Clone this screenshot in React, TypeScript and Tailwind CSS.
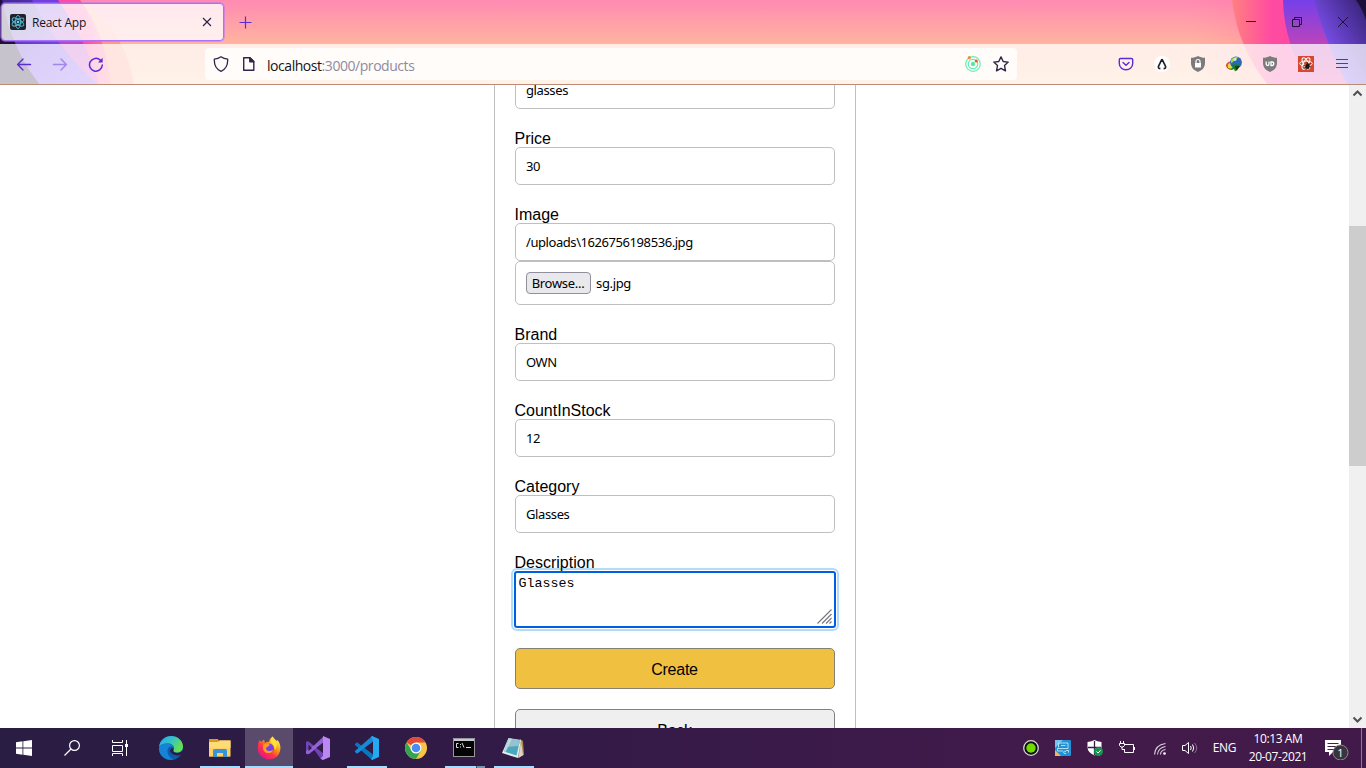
import React from "react";

const UI = "font-['Open_Sans','Noto_Sans',sans-serif]";

function ThemeArt() {
  return (
    <svg className="absolute inset-0" width="1366" height="85" viewBox="0 0 1366 85" preserveAspectRatio="none">
      <defs>
        <linearGradient id="sky" x1="0" y1="0" x2="0" y2="1">
          <stop offset="0" stopColor="#ff8ab2" />
          <stop offset=".5" stopColor="#ffb3a0" />
          <stop offset="1" stopColor="#ffcda2" />
        </linearGradient>
        <linearGradient id="lpurple" x1="0" y1="0" x2="1" y2="1">
          <stop offset="0" stopColor="#3d2a8c" />
          <stop offset=".5" stopColor="#6f42dd" />
          <stop offset="1" stopColor="#9059ff" />
        </linearGradient>
        <linearGradient id="lviolet" x1="0" y1="0" x2="0" y2="1">
          <stop offset="0" stopColor="#6f3fe0" />
          <stop offset=".5" stopColor="#b745c4" />
          <stop offset="1" stopColor="#ea50cc" />
        </linearGradient>
        <linearGradient id="lpink" x1="0" y1="0" x2="1" y2="0">
          <stop offset="0" stopColor="#ff4aa2" />
          <stop offset=".75" stopColor="#ff4aa2" />
          <stop offset="1" stopColor="#ff7f90" />
        </linearGradient>
        <linearGradient id="rorange" x1="0" y1="0" x2="1" y2="0">
          <stop offset="0" stopColor="#ff8080" />
          <stop offset=".3" stopColor="#ff4aa2" />
          <stop offset="1" stopColor="#ff4aa2" />
        </linearGradient>
        <linearGradient id="rviolet" x1="0" y1="0" x2="0" y2="1">
          <stop offset="0" stopColor="#7440ea" />
          <stop offset=".55" stopColor="#c044b8" />
          <stop offset="1" stopColor="#ee48a8" />
        </linearGradient>
        <linearGradient id="rpurple" x1="1" y1="0" x2=".3" y2=".7">
          <stop offset="0" stopColor="#33206f" />
          <stop offset="1" stopColor="#8052f4" />
        </linearGradient>
        <linearGradient id="glow" x1="0" y1="0" x2="1" y2="0">
          <stop offset="0" stopColor="#ff6aa2" stopOpacity="0" />
          <stop offset="1" stopColor="#ff5f9c" stopOpacity=".55" />
        </linearGradient>
      </defs>
      <rect width="1366" height="85" fill="url(#sky)" />
      <path d="M0 0H80Q126 30 134 85H0Z" fill="#ff9a86" />
      <path d="M0 0H80Q106 35 111 85H0Z" fill="url(#lpink)" />
      <path d="M0 0H58Q86 40 99 85H0Z" fill="url(#lviolet)" />
      <path d="M0 0H32Q62 55 99 85H0Z" fill="url(#lpurple)" />
      <path d="M0 0H2Q12 50 40 85H0Z" fill="#20113a" />
      <rect x="1190" width="78" height="85" fill="url(#glow)" opacity=".5" />
      <path d="M1232 0Q1238 48 1268 85H1366V0Z" fill="url(#rorange)" />
      <path d="M1283 0Q1284 45 1310 85H1366V0Z" fill="url(#rviolet)" />
      <path d="M1314 0Q1328 50 1348 85H1366V0Z" fill="url(#rpurple)" />
      <path d="M1356 0Q1363 10 1366 20V0Z" fill="#1c1038" />
    </svg>
  );
}

function ReactLogo() {
  return (
    <svg width="16" height="16" viewBox="0 0 16 16">
      <rect width="16" height="16" rx="2" fill="#20232a" />
      <g fill="none" stroke="#55b7d0" strokeWidth=".9">
        <ellipse cx="8" cy="8" rx="2.6" ry="6.6" />
        <ellipse cx="8" cy="8" rx="2.6" ry="6.6" transform="rotate(60 8 8)" />
        <ellipse cx="8" cy="8" rx="2.6" ry="6.6" transform="rotate(120 8 8)" />
      </g>
      <circle cx="8" cy="8" r="1.3" fill="#61dafb" />
    </svg>
  );
}

function TabStrip() {
  return (
    <div className="relative flex h-11 items-start">
      <div className="mt-[3px] ml-px flex h-[38px] w-[223px] items-center rounded-[4px] border border-[#ac70ff] bg-white/80 pl-2 shadow-[0_0_0_0.5px_#ac70ff]">
        <ReactLogo />
        <span className={`${UI} ml-[6px] w-[158px] pt-px text-[12px] tracking-[-0.25px] text-[#15141a]`}>React App</span>
        <svg className="ml-[9px]" width="16" height="16" viewBox="0 0 16 16" stroke="#2b1f44" strokeWidth="1.1">
          <path d="M4 4L12 12M12 4L4 12" />
        </svg>
      </div>
      <svg className="mt-[15px] ml-[14px]" width="16" height="16" viewBox="0 0 16 16" stroke="#5b2bd6" strokeWidth="1.2">
        <path d="M7.5 1.5V13.5M1.5 7.5H13.5" />
      </svg>
      <div className="ml-auto flex h-11 text-[#1f1235]">
        <svg width="46" height="44" viewBox="0 0 46 44" stroke="currentColor" fill="none">
          <path d="M18 21.5H28" />
        </svg>
        <svg width="46" height="44" viewBox="0 0 46 44" stroke="currentColor" fill="none">
          <path d="M18.5 19.5H25.5V26.5H18.5ZM20.5 19.5V17.5H27.5V24.5H25.5" />
        </svg>
        <svg width="46" height="44" viewBox="0 0 46 44" stroke="currentColor" fill="none">
          <path d="M18 17L28 27M28 17L18 27" />
        </svg>
      </div>
    </div>
  );
}

function Shield({ children }: { children: React.ReactNode }) {
  return (
    <svg width="16" height="16" viewBox="0 0 16 16">
      <path d="M8 0C10 1.2 12.5 1.7 15 1.8V7C15 11.5 12 14.5 8 16C4 14.5 1 11.5 1 7V1.8C3.5 1.7 6 1.2 8 0Z" fill="#7b7b7b" />
      {children}
    </svg>
  );
}

function Toolbar() {
  return (
    <div className="relative flex h-[41px] items-center border-b border-[#bc8a78] bg-white/75">
      <div className="flex w-[205px] gap-5 pl-4 text-[#5b2bd6]">
        <svg width="16" height="16" viewBox="0 0 16 16" fill="none" stroke="currentColor" strokeWidth="1.4" strokeLinecap="round" strokeLinejoin="round">
          <path d="M14.5 8.5H1.8M7 3.1L1.6 8.5L7 13.9" />
        </svg>
        <svg className="opacity-45" width="16" height="16" viewBox="0 0 16 16" fill="none" stroke="currentColor" strokeWidth="1.4" strokeLinecap="round" strokeLinejoin="round">
          <path d="M1.5 8.5H14.2M9 3.1L14.4 8.5L9 13.9" />
        </svg>
        <svg width="16" height="16" viewBox="0 0 16 16" fill="none" stroke="currentColor" strokeWidth="1.5" strokeLinecap="round">
          <path d="M14.3 9A6.4 6.4 0 1 1 12.3 4.1" />
          <path d="M14.6 1.8V6.4H10Z" fill="currentColor" stroke="none" />
        </svg>
      </div>
      <div className="flex h-8 w-[812px] items-center rounded-[4px] bg-[#fffcf9] px-2">
        <svg width="16" height="16" viewBox="0 0 16 16" fill="none" stroke="#30254a" strokeWidth="1.3" strokeLinejoin="round">
          <path d="M8 .8C9.6 2 12 3 14.7 3.2C14.9 8.5 12.5 13.5 8 15.3C3.5 13.5 1.1 8.5 1.3 3.2C4 3 6.400 2 8 .8Z" />
        </svg>
        <svg className="ml-3" width="16" height="16" viewBox="0 0 16 16" fill="none" stroke="#30254a" strokeWidth="1.4" strokeLinejoin="round">
          <path d="M2.7 1.7H9L12.8 5.5V14.3H2.7Z" />
          <path d="M8.8 1.7V5.7H12.8Z" fill="#30254a" />
        </svg>
        <span className={`${UI} ml-[10px] pt-[3px] text-[14px] leading-[19px] tracking-[-0.45px] text-[#8f8aa0]`}>
          <span className="text-[#15141a]">localhost</span>:3000/products
        </span>
        <svg className="ml-auto" width="16" height="16" viewBox="0 0 16 16" fill="none" stroke="#6aefa8" strokeWidth="1.2">
          <circle cx="8" cy="8" r="7.3" />
          <circle cx="8" cy="8" r="4.7" stroke="#62ebc4" />
          <circle cx="8" cy="8" r="2.2" fill="#5ce8a0" stroke="none" />
          <circle cx="4.3" cy="1.7" r="1.6" fill="#f28a3c" stroke="none" />
          <circle cx="11.3" cy="5" r="1.6" fill="#f0552c" stroke="none" />
        </svg>
        <svg className="ml-3" width="16" height="16" viewBox="0 0 16 16" fill="none" stroke="#30254a" strokeWidth="1.4" strokeLinejoin="round">
          <path d="M8 .9L10.2 5.5L15.2 6.1L11.5 9.6L12.5 14.8L8 12.3L3.5 14.8L4.5 9.6L.8 6.1L5.8 5.5Z" />
        </svg>
      </div>
      <div className="ml-auto flex gap-5 pr-4">
        <svg width="16" height="16" viewBox="0 0 16 16" fill="none" stroke="#5b2bd6" strokeWidth="1.4" strokeLinecap="round" strokeLinejoin="round">
          <path d="M2.5 2.5H13.5Q14.7 2.5 14.7 3.7V7.5A6.7 6.3 0 0 1 1.3 7.5V3.7Q1.3 2.5 2.5 2.5Z" />
          <path d="M5 6.5L8 9.3L11 6.5" />
        </svg>
        <svg width="16" height="16" viewBox="0 0 16 16">
          <circle cx="8" cy="8" r="8" fill="#fff" />
          <path d="M8 3.2L4.5 10.2Q3.9 12.5 6.4 12.7M8 3.2L11.5 10.2Q12.1 12.5 9.6 12.7" fill="none" stroke="#222" strokeWidth="1.7" />
        </svg>
        <Shield>
          <rect x="5" y="7" width="6" height="4.5" fill="#fff" />
          <path d="M6 7V5.5A2 2 0 0 1 10 5.5V7" fill="none" stroke="#fff" strokeWidth="1.2" />
        </Shield>
        <svg width="16" height="16" viewBox="0 0 16 16">
          <ellipse cx="5" cy="9.5" rx="5" ry="4" fill="#e3482b" />
          <ellipse cx="5.8" cy="10" rx="4" ry="3.2" fill="#f2d83b" />
          <circle cx="10" cy="6.5" r="5.9" fill="#2b69b8" />
          <path d="M5 4C7 1 10 .5 12 1.5Q10 4 8.5 4Q7 7 5 7Z" fill="#a9d63b" />
          <circle cx="9" cy="3.5" r="1.5" fill="#e5f4ff" opacity=".8" />
          <path d="M2 12Q5 14 7 11L6 8.5L13.5 8.5L12.5 12L9 15.5L8 13Q4 15 2 12Z" fill="#16801f" />
          <path d="M9 10H14L10.5 15Z" fill="#0b4212" />
        </svg>
        <Shield>
          <path d="M4.2 5.5V8Q4.2 9.5 5.600 9.500Q7 9.500 7 8V5.500M9 6V9.500H10.200Q11.800 9.300 11.800 7.700Q11.800 6 10.200 6Z" fill="none" stroke="#fff" strokeWidth="1.3" />
        </Shield>
        <svg width="16" height="16" viewBox="0 0 16 16">
          <rect width="16" height="16" fill="#d9472f" />
          <g fill="none" stroke="#fff" strokeWidth="1">
            <ellipse cx="8" cy="7.5" rx="6.3" ry="2.5" />
            <ellipse cx="8" cy="7.5" rx="6.3" ry="2.5" transform="rotate(60 8 7.5)" />
            <ellipse cx="8" cy="7.5" rx="6.3" ry="2.5" transform="rotate(120 8 7.5)" />
          </g>
          <ellipse cx="9.5" cy="10.2" rx="2" ry="2.900" fill="#241512" transform="rotate(25 9.5 10.2)" />
          <path d="M5.5 9.5L13 11M6.5 13L12.5 7M11 13.5L9 6" stroke="#241512" strokeWidth=".9" />
        </svg>
        <svg width="16" height="16" viewBox="0 0 16 16" stroke="#5b2bd6" strokeWidth="1.2">
          <path d="M2 3.5H14M2 7.5H14M2 11.5H14" />
        </svg>
      </div>
    </div>
  );
}

const INPUT = "flex h-[38px] items-center rounded-[5px] border border-[#bfbfbf] bg-white px-[10px] pt-[2px]";
const VALUE = "font-['Noto_Sans','Open_Sans',sans-serif] text-[13px] text-black";

function Field({ label, value, tight, children }: { label?: string; value: string; tight?: boolean; children?: React.ReactNode }) {
  return (
    <div className="mb-5">
      {label && <div className="h-[18px] pt-px text-[16px] leading-[18px] text-black">{label}</div>}
      <div className={INPUT}>
        <span className={`${VALUE} ml-[0.5px] ${tight ? "tracking-[-0.43px]" : "tracking-[-0.38px]"}`}>{value}</span>
      </div>
      {children}
    </div>
  );
}

function Page() {
  return (
    <div className="flex h-[643px] overflow-hidden bg-white font-['Liberation_Sans',Arial,sans-serif]">
      <div className="flex flex-1 justify-center overflow-hidden">
        <div className="h-[700px] w-[362px] shrink-0 border-x border-[#bfbfbf] px-5">
          <div className="-mt-[14px]">
            <Field value="glasses" />
            <Field label="Price" value="30" />
            <Field label="Image" value="/uploads\1626756198536.jpg" tight>
              <div className="flex h-11 items-center rounded-[5px] border border-[#bfbfbf] px-[10px]">
                <span className={`${VALUE} flex h-[22px] w-[65px] items-center justify-center rounded-[4px] border border-[#8f8f9d] bg-[#e9e9ed] pt-[2px] tracking-[-0.3px]`}>Browse...</span>
                <span className={`${VALUE} ml-[5.5px] pt-[2px] tracking-[-0.35px]`}>sg.jpg</span>
              </div>
            </Field>
            <Field label="Brand" value="OWN" tight />
            <Field label="CountInStock" value="12" />
            <Field label="Category" value="Glasses" />
            <div className="relative z-10 h-[18px] pt-px text-[16px] leading-[18px] text-black">Description</div>
            <div className="relative -mx-px h-[57px] rounded-[3px] border-2 border-[#0060df] bg-white pt-[3px] pl-[3px] font-['Liberation_Mono','Courier_New',monospace] text-[13.333px] leading-[15px] text-black shadow-[0_0_0_1px_#fff,0_0_0_3px_#b3dcf8]">
              Glasses
              <svg className="absolute right-[2px] bottom-[2px]" width="15" height="15" viewBox="0 0 15 15" stroke="#77767d" strokeWidth="1.1">
                <path d="M.5 14.5L14.5 .5M5 14.5L14.5 5M9 14.5L14.5 9M12.5 14.5L14.5 12.5" />
              </svg>
            </div>
            <div className="mt-5 flex h-[41px] items-center justify-center rounded-[5px] border border-[#85806f] bg-[#f0c040] pt-[2px] text-[16px] tracking-[-0.25px] text-black">Create</div>
            <div className="mt-5 flex h-[41px] items-center justify-center rounded-[5px] border border-[#808080] bg-[#efefef] pt-[2px] text-[16px] tracking-[-0.25px] text-black">Back</div>
          </div>
        </div>
      </div>
      <div className="flex w-[17px] flex-col items-center bg-[#f0f0f0]">
        <svg width="17" height="17" viewBox="0 0 17 17" fill="none" stroke="#505050" strokeWidth="2">
          <path d="M4.5 10.5L8.5 6.5L12.5 10.5" />
        </svg>
        <div className="mt-[124px] h-[240px] w-[17px] bg-[#cdcdcd]" />
        <svg className="mt-auto" width="17" height="17" viewBox="0 0 17 17" fill="none" stroke="#505050" strokeWidth="2">
          <path d="M4.5 6.5L8.5 10.5L12.5 6.5" />
        </svg>
      </div>
    </div>
  );
}

function AppButton({ children, active, running, multi }: { children: React.ReactNode; active?: boolean; running?: boolean; multi?: boolean }) {
  return (
    <div className={`flex h-10 w-12 flex-col items-center ${active ? "bg-[#5a4a6c]" : ""}`}>
      <div className="flex h-[38px] items-center pt-[2px]">{children}</div>
      {active && <div className="h-[2px] w-12 bg-[#a6dcff]" />}
      {running && (
        <div className="flex h-[2px] w-10 bg-[#a6dcff]">
          {multi && <div className="ml-auto h-[2px] w-[9px] border-l border-[#4b4666] bg-[#7295ac]" />}
        </div>
      )}
    </div>
  );
}

function Taskbar() {
  return (
    <div className="flex h-10 bg-[linear-gradient(90deg,#2a1d43_0%,#2e1b45_25%,#371a48_50%,#431b4b_80%,#421a4a_100%)] text-white">
      <div className="mr-[3px] flex">
        <div className="flex w-12 items-center justify-center">
          <svg width="16" height="16" viewBox="0 0 16 16" fill="#fff">
            <path d="M0 2.3L6.500 1.300V7.500H0ZM7.300 1.200L16 0V7.500H7.300ZM0 8.400H6.500V14.700L0 13.800ZM7.300 8.400H16V16L7.300 14.800Z" />
          </svg>
        </div>
        <div className="flex w-12 items-center justify-center">
          <svg width="16" height="16" viewBox="0 0 16 16" fill="none" stroke="#fff" strokeWidth="1.2">
            <circle cx="10.5" cy="5.5" r="4.9" />
            <path d="M7 9L.5 15.5" />
          </svg>
        </div>
        <div className="flex w-12 items-center justify-center">
          <svg width="16" height="16" viewBox="0 0 16 16" fill="none" stroke="#fff">
            <path d="M.5 0V2.500H10.500V0M.5 5.500H10.500V11.500H.5ZM.5 16V13.500H10.500V16M14.500 0V16" />
            <rect x="13" y="4" width="3" height="3" fill="#fff" stroke="none" />
          </svg>
        </div>
      </div>
      <div className="flex gap-px">
        <AppButton>
          <svg width="24" height="24" viewBox="0 0 24 24">
            <defs>
              <linearGradient id="edge1" x1="0" y1="0" x2="1" y2=".5">
                <stop offset="0" stopColor="#2aa5e8" />
                <stop offset=".5" stopColor="#35c1c8" />
                <stop offset="1" stopColor="#67e04e" />
              </linearGradient>
            </defs>
            <circle cx="12" cy="12" r="12" fill="#0c5ca8" />
            <path d="M0 11C1 4 6 0 12 0C19 0 24 5 24 10.5C24 14.5 21 16.5 18 16.5C15 16.5 13.8 15.3 14.3 14.3C16 12 14.5 8 10 7.5C5 7 1 9 0 11Z" fill="url(#edge1)" />
            <path d="M0 12C1 9 4 7.4 8 7.4C12 7.4 14.5 9 14.8 12C13 9.5 9 10.5 8.5 14C8 18 11 22 15 23.500C6 25.500-.5 19 0 12Z" fill="#1583d6" />
            <path d="M14.3 14.5C14 16 16 17.2 18.5 17C20.5 16.8 22 16 24 14.500V18.500L22.500 18.500C18 20.500 12.500 19 11 15C11.500 12.200 14 12 14.500 12.500Z" fill="#2c1c45" />
          </svg>
        </AppButton>
        <AppButton running>
          <svg width="22" height="18" viewBox="0 0 22 18">
            <path d="M0 0H9L10 2H21V17.5H0Z" fill="#dc9b16" />
            <path d="M0 3H9L10.5 1.5H21.5V17.5H0Z" fill="#fbd166" />
            <path d="M0 3H9L10.5 1.5H21.5V9H0Z" fill="#ffdb78" />
            <path d="M4 18V11.5Q4 10 5.5 10H16.5Q18 10 18 11.5V18H14V14H8V18Z" fill="#3b93d7" />
          </svg>
        </AppButton>
        <AppButton active>
          <svg width="24" height="24" viewBox="0 0 24 24">
            <defs>
              <linearGradient id="fox" x1=".85" y1=".1" x2=".2" y2=".9">
                <stop offset="0" stopColor="#fff44f" />
                <stop offset=".35" stopColor="#ff980e" />
                <stop offset=".65" stopColor="#ff3647" />
                <stop offset="1" stopColor="#e31587" />
              </linearGradient>
            </defs>
            <path d="M1 9C1 7 2 5 3 4L4 6L7 3.5L8 7Q11 5 12 6Q13 2 15.5 .5Q17 3 20 5L20.5 4Q24 8 23.3 13.5C22.5 20 17.5 23.5 12 23.5C5.5 23.5 .5 18 .7 12Z" fill="url(#fox)" />
            <circle cx="12.3" cy="12.5" r="4.7" fill="#7543e5" />
            <path d="M6 9C8 7 12 7.5 13 9C11 11 10 10.5 9 12C9 15 12 16 16 14C15 19 7 18 6 13Z" fill="#ff9b22" />
            <path d="M15.5 .5Q19 4 20 8Q20 11 18 14Q17 8 13.5 6.5Q13.5 3 15.5 .5Z" fill="#ffdf3c" />
          </svg>
        </AppButton>
        <AppButton>
          <svg width="24" height="24" viewBox="0 0 24 24">
            <path d="M0 6L2 5L17 17V24L2 18L0 17.5Z" fill="#7044b5" />
            <path d="M0 17.5L2 18.5L18 6V0L8.500 9L0 15Z" fill="#9461d8" />
            <path d="M0 19L3 18.300L8.500 14L15.500 24H0Z" fill="#311b47" />
            <path d="M8.500 14L17 24V17.500L11 12.500Z" fill="#7044b5" />
            <path d="M2.5 9V15L6 12ZM17 7V17L10.5 12Z" fill="#311b47" />
            <path d="M17 0L24 3V21L17 24L14.5 22.5L17 20Z" fill="#bb88f3" />
          </svg>
        </AppButton>
        <AppButton running>
          <svg width="24" height="24" viewBox="0 0 24 24">
            <path d="M0 8L2 6.2L18 18.5V24L16 23L0 9Z" fill="#0877bd" />
            <path d="M0 16L2 17.7L18 5.5V0L16 1L0 15Z" fill="#178bd5" />
            <path d="M17 0L24 3V21L17 24L16 23L18 20V4L16 1Z" fill="#27a9f1" />
          </svg>
        </AppButton>
        <AppButton>
          <svg width="22" height="22" viewBox="0 0 22 22">
            <circle cx="11" cy="11" r="11" fill="#f7c544" />
            <path d="M11 11L1.5 5.5A11 11 0 0 1 20.5 5.5H11Z" fill="#e24a3d" />
            <path d="M1.5 5.5A11 11 0 0 0 11 22L16 13.5L11 11L6 12.5Z" fill="#33a452" />
            <circle cx="11" cy="11" r="5.5" fill="#fff" />
            <circle cx="11" cy="11" r="4.3" fill="#4a8cf0" />
          </svg>
        </AppButton>
        <AppButton running multi>
          <svg className="mr-[2px]" width="22" height="20" viewBox="0 0 22 20">
            <rect x=".5" y=".5" width="21" height="18" fill="#050505" stroke="#97979b" />
            <path d="M1 1H21V3H1Z" fill="#c7c9cf" />
            <path d="M5.5 5.5H3.5V9.5H5.5M7.500 6V7M7.500 8.500V9.500M9 5L11 9.500M13 9.500H18" fill="none" stroke="#ddd" />
          </svg>
        </AppButton>
        <AppButton running>
          <svg className="mr-[2px]" width="24" height="24" viewBox="0 0 24 24">
            <path d="M19 3L22 5L23 19L17 22Z" fill="#a8884e" />
            <path d="M7.5 2L20 4L17 22L1 17Z" fill="#e4ecec" />
            <path d="M7.5 2.5L19 4.5L15.5 19.500L3 15.5Z" fill="#4ba7bd" />
            <path d="M7.5 2.5L19 4.5L17.500 10L5 11Z" fill="#93c4ce" />
            <path d="M7.5 2.5L11 3.1L4.500 16L3 15.5Z" fill="#b9dadf" />
            <path d="M20 5L22 19L17.5 22Z" fill="#d9d6c4" />
          </svg>
        </AppButton>
      </div>
      <div className={`${UI} ml-auto flex items-center`}>
        <div className="flex items-center">
          <svg className="mr-4" width="16" height="16" viewBox="0 0 16 16">
            <circle cx="8" cy="8" r="7.3" fill="#101010" stroke="#d8d8d8" strokeWidth="1.3" />
            <circle cx="8" cy="8" r="4.7" fill="#72dc00" />
          </svg>
          <svg className="mr-4" width="16" height="16" viewBox="0 0 16 16">
            <rect width="16" height="16" rx="1" fill="#2291d5" />
            <path d="M0 8V0H8Z" fill="#70c4ee" />
            <path d="M0 10L6 16H0Z" fill="#e9b765" />
            <path d="M3.5 7.5V3H13V8.5H2.5V11H8M6 5.5H10.5M11 11.5Q9 10.5 8.5 12Q8.5 14 11 13.5M11 10.5H13.5V12.5" fill="none" stroke="#d3effc" strokeWidth=".8" />
          </svg>
          <svg className="mr-4" width="16" height="16" viewBox="0 0 16 16">
            <path d="M7.5 0Q10 1.5 14.5 2V7Q14.5 12.5 7.5 15.5Q.5 12.5 .5 7V2Q5 1.5 7.5 0Z" fill="#fff" />
            <path d="M7.5 1V15M1 7.5H14" stroke="#3b1a48" strokeWidth="1.3" />
            <circle cx="11.5" cy="11.5" r="4.5" fill="#16964f" />
            <path d="M9.5 11.5L11 13L13.7 10.3" fill="none" stroke="#fff" />
          </svg>
          <svg className="mr-[17px]" width="16" height="16" viewBox="0 0 16 16" fill="none" stroke="#fff">
            <path d="M6 4.5H14.5V12.5H5.5V10M15.5 7V10M1.5 1V3M4.5 1V3M.5 3.5H5.5V5.5L4 7H2L.5 5.5ZM3 7V9.5H6" />
          </svg>
          <svg className="mr-[14px]" width="16" height="16" viewBox="0 0 16 16" fill="none" stroke="#d9cedd" strokeWidth="1.1">
            <path d="M2.5 14.5Q3 5 13.5 3.5M5.5 14.5Q6 8 13.5 6.5M8.5 14.5Q8.5 10.5 13.5 9.5" />
            <circle cx="12.5" cy="13.5" r="1.3" fill="#fff" stroke="none" />
          </svg>
          <svg width="16" height="16" viewBox="0 0 16 16" fill="none" stroke="#fff">
            <path d="M.5 5.5H3L6.5 2.5V13.5L3 10.5H.5ZM8.5 6Q10 8 8.5 10M10.5 4.5Q13 8 10.5 11.5" />
            <path d="M12.5 3Q17 8 12.5 13" stroke="#8d7292" />
          </svg>
        </div>
        <span className="w-[53px] text-center text-[12px] tracking-[-0.3px]">ENG</span>
        <div className="w-[56px] text-center text-[12px] leading-[18px] tracking-[-0.4px] whitespace-nowrap">
          <div className="mr-[-7px] ml-[-9px]">10:13 AM</div>
          <div className="mr-[-7px] ml-[-9px]">20-07-2021</div>
        </div>
        <svg className="ml-[17px]" width="26" height="24" viewBox="0 0 26 24">
          <path d="M1 4H17V16H9L5 20V16H1Z" fill="#fff" />
          <path d="M3.5 7.5H14.5M3.5 10.5H14.5M3.5 13.5H11" stroke="#3e2345" />
          <circle cx="16.5" cy="16" r="7.500" transform="translate(0 .5)" fill="#3a343e" stroke="#8e8991" />
          <text x="16.5" y="20.5" fontSize="11" fill="#fff" textAnchor="middle">1</text>
        </svg>
        <div className="mr-1 ml-[11px] h-10 w-px bg-[#8f7a95]" />
      </div>
    </div>
  );
}

export default function App() {
  return (
    <div className="flex h-[768px] w-[1366px] flex-col overflow-hidden">
      <header className="relative h-[85px] shrink-0 overflow-hidden">
        <ThemeArt />
        <TabStrip />
        <Toolbar />
      </header>
      <Page />
      <Taskbar />
    </div>
  );
}
